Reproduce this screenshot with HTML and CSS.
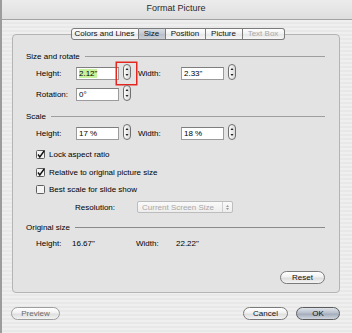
FILE: index.html
```html
<!DOCTYPE html>
<html lang="en">
<head>
    <meta charset="UTF-8">
    <title>Format Picture</title>
    <link rel="stylesheet" href="styles.css">
</head>
<body>
    <div class="window">
        <div class="titlebar">Format Picture</div>

        <div class="tabs">
            <span class="tab">Colors and Lines</span>
            <span class="tab selected">Size</span>
            <span class="tab">Position</span>
            <span class="tab">Picture</span>
            <span class="tab disabled">Text Box</span>
        </div>

        <div class="panel">
            <div class="group-title">Size and rotate</div>
            <div class="row r-height">
                <span class="label">Height:</span>
                <span class="field"><span class="selected-text">2.12"</span></span>
                <span class="spin marked">
                    <svg width="8" height="16" viewBox="0 0 8 16"><rect x="0.5" y="0.5" width="7" height="15" rx="3.5" fill="url(#sg)" stroke="#6f6f6f"/><path d="M2.5 6 L4 4 L5.5 6 Z M2.5 10 L4 12 L5.5 10 Z" fill="#222"/><defs><linearGradient id="sg" x1="0" x2="1"><stop offset="0" stop-color="#fff"/><stop offset="1" stop-color="#d6d6d6"/></linearGradient></defs></svg>
                    <span class="mark"></span>
                </span>
                <span class="label label-w">Width:</span>
                <span class="field">2.33"</span>
                <span class="spin">
                    <svg width="8" height="16" viewBox="0 0 8 16"><rect x="0.5" y="0.5" width="7" height="15" rx="3.5" fill="url(#sg)" stroke="#6f6f6f"/><path d="M2.5 6 L4 4 L5.5 6 Z M2.5 10 L4 12 L5.5 10 Z" fill="#222"/></svg>
                </span>
            </div>
            <div class="row r-rotation">
                <span class="label">Rotation:</span>
                <span class="field">0°</span>
                <span class="spin">
                    <svg width="8" height="16" viewBox="0 0 8 16"><rect x="0.5" y="0.5" width="7" height="15" rx="3.5" fill="url(#sg)" stroke="#6f6f6f"/><path d="M2.5 6 L4 4 L5.5 6 Z M2.5 10 L4 12 L5.5 10 Z" fill="#222"/></svg>
                </span>
            </div>

            <div class="group-title g-scale">Scale</div>
            <div class="row r-scale">
                <span class="label">Height:</span>
                <span class="field">17 %</span>
                <span class="spin">
                    <svg width="8" height="16" viewBox="0 0 8 16"><rect x="0.5" y="0.5" width="7" height="15" rx="3.5" fill="url(#sg)" stroke="#6f6f6f"/><path d="M2.5 6 L4 4 L5.5 6 Z M2.5 10 L4 12 L5.5 10 Z" fill="#222"/></svg>
                </span>
                <span class="label label-w">Width:</span>
                <span class="field">18 %</span>
                <span class="spin">
                    <svg width="8" height="16" viewBox="0 0 8 16"><rect x="0.5" y="0.5" width="7" height="15" rx="3.5" fill="url(#sg)" stroke="#6f6f6f"/><path d="M2.5 6 L4 4 L5.5 6 Z M2.5 10 L4 12 L5.5 10 Z" fill="#222"/></svg>
                </span>
            </div>
            <div class="row check c-lock">
                <svg width="9" height="9" viewBox="0 0 9 9"><rect x="0.5" y="0.5" width="8" height="8" rx="1" fill="#f4f4f4" stroke="#5e5e5e"/><path d="M2 4.5 L3.8 7 L8.5 0.5" fill="none" stroke="#111" stroke-width="1.4"/></svg>
                <span>Lock aspect ratio</span>
            </div>
            <div class="row check c-relative">
                <svg width="9" height="9" viewBox="0 0 9 9"><rect x="0.5" y="0.5" width="8" height="8" rx="1" fill="#f4f4f4" stroke="#5e5e5e"/><path d="M2 4.5 L3.8 7 L8.5 0.5" fill="none" stroke="#111" stroke-width="1.4"/></svg>
                <span>Relative to original picture size</span>
            </div>
            <div class="row check c-best">
                <svg width="9" height="9" viewBox="0 0 9 9"><rect x="0.5" y="0.5" width="8" height="8" rx="1" fill="#f4f4f4" stroke="#5e5e5e"/></svg>
                <span>Best scale for slide show</span>
            </div>
            <div class="row r-resolution">
                <span class="label-res">Resolution:</span>
                <span class="popup">
                    <span class="popup-text">Current Screen Size</span>
                    <span class="popup-arrows">
                        <svg width="5" height="7" viewBox="0 0 5 7"><path d="M1 3 L2.5 1 L4 3 Z M1 4 L2.5 6 L4 4 Z" fill="#999"/></svg>
                    </span>
                </span>
            </div>

            <div class="group-title g-original">Original size</div>
            <div class="row r-original">
                <span class="label label-o">Height:</span>
                <span class="value">16.67"</span>
                <span class="label">Width:</span>
                <span class="value">22.22"</span>
            </div>

            <div class="reset-row">
                <button class="btn">Reset</button>
            </div>
        </div>

        <div class="footer">
            <button class="btn btn-preview">Preview</button>
            <div class="spacer"></div>
            <button class="btn">Cancel</button>
            <button class="btn btn-ok">OK</button>
        </div>
    </div>
</body>
</html>
```

FILE: styles.css
```css
body {
    margin: 0;
    width: 352px;
    height: 333px;
    overflow: hidden;
    font-family: 'Liberation Sans', Arial, sans-serif;
    font-size: 8px;
    color: #000;
}
.window {
    width: 350px;
    height: 333px;
    border-left: 2px solid #9c9c9c;
    background: repeating-linear-gradient(to bottom, #efefef 0, #efefef 2px, #e8e8e8 2px, #e8e8e8 4px);
}
.titlebar {
    height: 19px;
    line-height: 17px;
    text-align: center;
    font-size: 9px;
    color: #2a2a2a;
    background: linear-gradient(#ececec, #dedede);
    border-bottom: 1px solid #a3a3a3;
    padding-right: 2px;
}

/* tabs */
.tabs {
    position: relative;
    z-index: 1;
    display: flex;
    justify-content: center;
    margin: 8px 0 0 0;
    padding-left: 1px;
}
.tab {
    box-sizing: border-box;
    height: 12px;
    line-height: 10px;
    padding: 0;
    white-space: nowrap;
    border: 1px solid #7b7b7b;
    border-left: none;
    background: linear-gradient(#ffffff, #f0f0f0 50%, #e6e6e6 50%, #f7f7f7);
    color: #111;
    text-align: center;
}
.tab:first-child {
    border-left: 1px solid #7b7b7b;
    border-radius: 3px 0 0 3px;
    width: 68px;
}
.tab:last-child {
    border-radius: 0 3px 3px 0;
}
.tab:nth-child(2) { width: 27px; }
.tab:nth-child(3) { width: 40px; }
.tab:nth-child(4) { width: 37px; }
.tab:nth-child(5) { width: 42px; }
.tab.selected {
    background: linear-gradient(#d9dde4, #c3c8d1 50%, #b7bdc8 50%, #cbd0d8);
}
.tab.disabled {
    color: #a8a8a8;
}

/* panel */
.panel {
    box-sizing: border-box;
    margin: -6px 0 0 10px;
    width: 328px;
    height: 259px;
    border: 1px solid #b4b4b4;
    border-radius: 4px;
    background: #e3e3e3;
    padding: 15px 14px 0 13px;
}
.group-title {
    height: 12px;
    display: flex;
    align-items: center;
}
.group-title::after {
    content: '';
    flex: 1;
    height: 1px;
    margin-left: 5px;
    background: #9e9e9e;
}
.g-scale { margin-top: 7px; }
.g-original { margin-top: 6px; }
.g-original::after { background: #8a8a8a; }

.row {
    display: flex;
    align-items: center;
    margin-left: 10px;
    height: 18px;
}
.r-height { margin-top: 2px; }
.r-rotation { margin-top: 3px; }
.r-scale { margin-top: 2px; }
.label {
    width: 40px;
}
.label-w {
    width: 43px;
    margin-left: 7px;
}
.field {
    width: 39px;
    height: 11px;
    line-height: 11px;
    padding-left: 2px;
    border: 1px solid #9b9b9b;
    border-top-color: #7e7e7e;
    background: #fff;
    color: #000;
}
.selected-text {
    background: #c6f29c;
}
.spin {
    position: relative;
    width: 8px;
    height: 16px;
    margin-left: 4px;
    margin-top: -3px;
}
.spin svg {
    display: block;
}
.mark {
    position: absolute;
    left: -7px;
    top: -2px;
    width: 19px;
    height: 21px;
    border: 1px solid #e3261f;
    box-shadow: 0 0 0 0.5px #e3261f;
}

.check {
    height: 16px;
}
.check svg {
    margin-right: 4px;
}
.c-lock { margin-top: 4px; }
.c-relative { margin-top: 2px; }
.c-best { margin-top: 1px; }

.r-resolution {
    height: 16px;
    margin-top: 2px;
    margin-left: 49px;
}
.label-res {
    width: 62px;
}
.popup {
    display: flex;
    align-items: center;
    width: 94px;
    height: 10px;
    border: 1px solid #bdbdbd;
    border-radius: 2px;
    background: linear-gradient(#fafafa, #ededed);
    color: #a9a9a9;
}
.popup-text {
    flex: 1;
    padding-left: 4px;
}
.popup-arrows {
    display: flex;
    align-items: center;
    justify-content: center;
    width: 9px;
    height: 10px;
    border-left: 1px solid #cfcfcf;
}

.r-original {
    height: 16px;
    margin-top: 2px;
}
.label-o {
    width: 36px;
}
.value {
    width: 64px;
}
.value:last-child {
    width: auto;
}

.reset-row {
    display: flex;
    justify-content: flex-end;
    margin-top: 20px;
}

/* buttons */
.btn {
    box-sizing: border-box;
    height: 13px;
    padding: 0;
    border: 1px solid #7a7a7a;
    border-radius: 7px;
    background: linear-gradient(#ffffff, #f1f1f1 45%, #dedede 55%, #f4f4f4);
    font-family: 'Liberation Sans', Arial, sans-serif;
    font-size: 8px;
    line-height: 11px;
    color: #111;
    width: 45px;
}
.footer {
    display: flex;
    align-items: center;
    margin-top: 14px;
    padding: 0 12px 0 9px;
}
.spacer {
    flex: 1;
}
.btn-preview {
    width: 49px;
    color: #6a6a6a;
    border-color: #9d9d9d;
}
.btn-ok {
    width: 44px;
    margin-left: 8px;
    border-color: #5b5b5b;
    background: linear-gradient(#dfe3ea, #b9c0cc 45%, #a3acbb 55%, #d1d7e0);
}
```
